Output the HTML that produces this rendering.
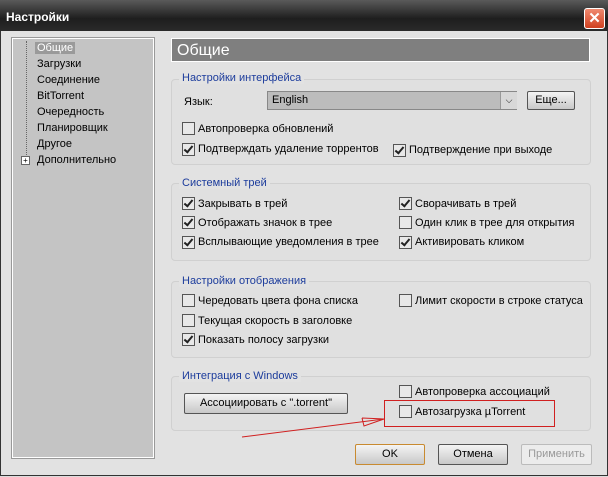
<!DOCTYPE html><html><head><meta charset="utf-8"><style>
body{margin:0;width:608px;height:477px;overflow:hidden;background:#dcdcdc;font-family:"Liberation Sans",sans-serif;font-size:11px;color:#000;position:relative}
.a{position:absolute}
.title{left:0;top:0;width:608px;height:31px;background:linear-gradient(#5a5a5a,#1e1e1e 60%,#2a2a2a);}
.win{left:0;top:31px;width:606px;height:444px;background:#e2e2e2;border:1px solid #333;border-top:none}
.tree{left:12px;top:38px;width:140px;height:418px;background:#c4c4c4;border:1px solid #fff;outline:1px solid #999}
.tree div{position:absolute;left:24px;font-size:11px}
.hdr{left:171px;top:38px;width:419px;height:24px;background:#7f7f7f;border:1px solid #fff;color:#fff;font-size:16px;line-height:24px;padding-left:5px;box-sizing:border-box}
.grp{left:171px;width:420px;border:1px solid #d0d0d0;border-radius:4px;background:#e0e0e0;box-sizing:border-box}
.gt{color:#1c3c9c;font-size:11px;background:#e2e2e2;padding:0 3px}
.cb{position:absolute;width:11px;height:11px;border:1px solid #555;background:#e8e8e8}
.cb.c::after{content:"";position:absolute;left:3px;top:0px;width:3px;height:7px;border:solid #222;border-width:0 2px 2px 0;transform:rotate(40deg)}
.btn{position:absolute;border:1px solid #555;border-radius:2px;background:linear-gradient(#f4f4f4,#c8c8c8);text-align:center;font-size:11px;box-sizing:border-box}
</style></head><body>
<div class="a title"></div>
<div class="a" style="left:6px;top:10px;color:#fff;font-weight:bold;font-size:12px">Настройки</div>
<div class="a" style="left:584px;top:8px;width:19px;height:19px;background:linear-gradient(#f08a70,#d04020);border:1px solid #fff;border-radius:3px;color:#fff;font-weight:bold;text-align:center;line-height:19px;font-size:15px">✕</div>
<div class="a win"></div>
<div class="a tree">
<div style="top:3px;left:22px;background:#9a9a9a;color:#fff;padding:0 2px">Общие</div>
<div style="top:19px">Загрузки</div><div style="top:35px">Соединение</div><div style="top:51px">BitTorrent</div><div style="top:67px">Очередность</div><div style="top:83px">Планировщик</div><div style="top:99px">Другое</div><div style="top:115px">Дополнительно</div>
<span class="a" style="left:13px;top:2px;height:116px;border-left:1px dotted #666"></span>
<span class="a" style="left:8px;top:117px;width:7px;height:7px;border:1px solid #666;background:#fff;font-size:8px;line-height:7px;text-align:center">+</span>
</div>
<div class="a hdr">Общие</div>

<div class="a grp" style="top:79px;height:86px"></div>
<div class="a gt" style="left:179px;top:72px">Настройки интерфейса</div>
<div class="a" style="left:184px;top:96px">Язык:</div>
<div class="a" style="left:267px;top:91px;width:250px;height:19px;background:#bcbcbc;border:1px solid #888;box-sizing:border-box;padding:2px 4px">English</div>
<div class="a" style="left:500px;top:92px;width:16px;height:17px;background:#d8d8d8;border-left:1px solid #999;text-align:center;font-size:9px;line-height:17px">⌵</div>
<div class="btn" style="left:527px;top:91px;width:48px;height:19px;line-height:17px">Еще...</div>
<div class="cb" style="left:182px;top:122px"></div><div class="a" style="left:198px;top:123px">Автопроверка обновлений</div>
<div class="cb c" style="left:182px;top:143px"></div><div class="a" style="left:198px;top:143px">Подтверждать удаление торрентов</div>
<div class="cb c" style="left:393px;top:144px"></div><div class="a" style="left:409px;top:144px">Подтверждение при выходе</div>

<div class="a grp" style="top:183px;height:78px"></div>
<div class="a gt" style="left:179px;top:177px">Системный трей</div>
<div class="cb c" style="left:182px;top:197px"></div><div class="a" style="left:198px;top:198px">Закрывать в трей</div>
<div class="cb c" style="left:182px;top:216px"></div><div class="a" style="left:198px;top:217px">Отображать значок в трее</div>
<div class="cb c" style="left:182px;top:236px"></div><div class="a" style="left:198px;top:236px">Всплывающие уведомления в трее</div>
<div class="cb c" style="left:399px;top:197px"></div><div class="a" style="left:415px;top:198px">Сворачивать в трей</div>
<div class="cb" style="left:399px;top:216px"></div><div class="a" style="left:415px;top:217px">Один клик в трее для открытия</div>
<div class="cb c" style="left:399px;top:236px"></div><div class="a" style="left:415px;top:236px">Активировать кликом</div>

<div class="a grp" style="top:281px;height:77px"></div>
<div class="a gt" style="left:179px;top:275px">Настройки отображения</div>
<div class="cb" style="left:182px;top:294px"></div><div class="a" style="left:198px;top:295px">Чередовать цвета фона списка</div>
<div class="cb" style="left:182px;top:314px"></div><div class="a" style="left:198px;top:315px">Текущая скорость в заголовке</div>
<div class="cb c" style="left:182px;top:333px"></div><div class="a" style="left:198px;top:334px">Показать полосу загрузки</div>
<div class="cb" style="left:399px;top:294px"></div><div class="a" style="left:415px;top:295px">Лимит скорости в строке статуса</div>

<div class="a grp" style="top:376px;height:55px"></div>
<div class="a gt" style="left:179px;top:370px">Интеграция с Windows</div>
<div class="btn" style="left:184px;top:393px;width:164px;height:21px;line-height:19px">Ассоциировать с ".torrent"</div>
<div class="cb" style="left:399px;top:385px"></div><div class="a" style="left:415px;top:386px">Автопроверка ассоциаций</div>
<div class="a" style="left:384px;top:400px;width:171px;height:27px;border:1px solid #d02020;box-sizing:border-box"></div>
<div class="cb" style="left:399px;top:405px"></div><div class="a" style="left:415px;top:406px">Автозагрузка µTorrent</div>
<svg class="a" style="left:0;top:0" width="608" height="477"><g stroke="#d02020" fill="none" stroke-width="1"><line x1="242" y1="437" x2="384" y2="419"/><polyline points="362,418 384,419 364,426 362,418"/></g></svg>

<div class="btn" style="left:355px;top:444px;width:70px;height:21px;line-height:19px;border-color:#c88a30">OK</div>
<div class="btn" style="left:438px;top:444px;width:70px;height:21px;line-height:19px">Отмена</div>
<div class="btn" style="left:521px;top:444px;width:71px;height:21px;line-height:19px;background:#ececec;border-color:#bbb;color:#999">Применить</div>
</body></html>
